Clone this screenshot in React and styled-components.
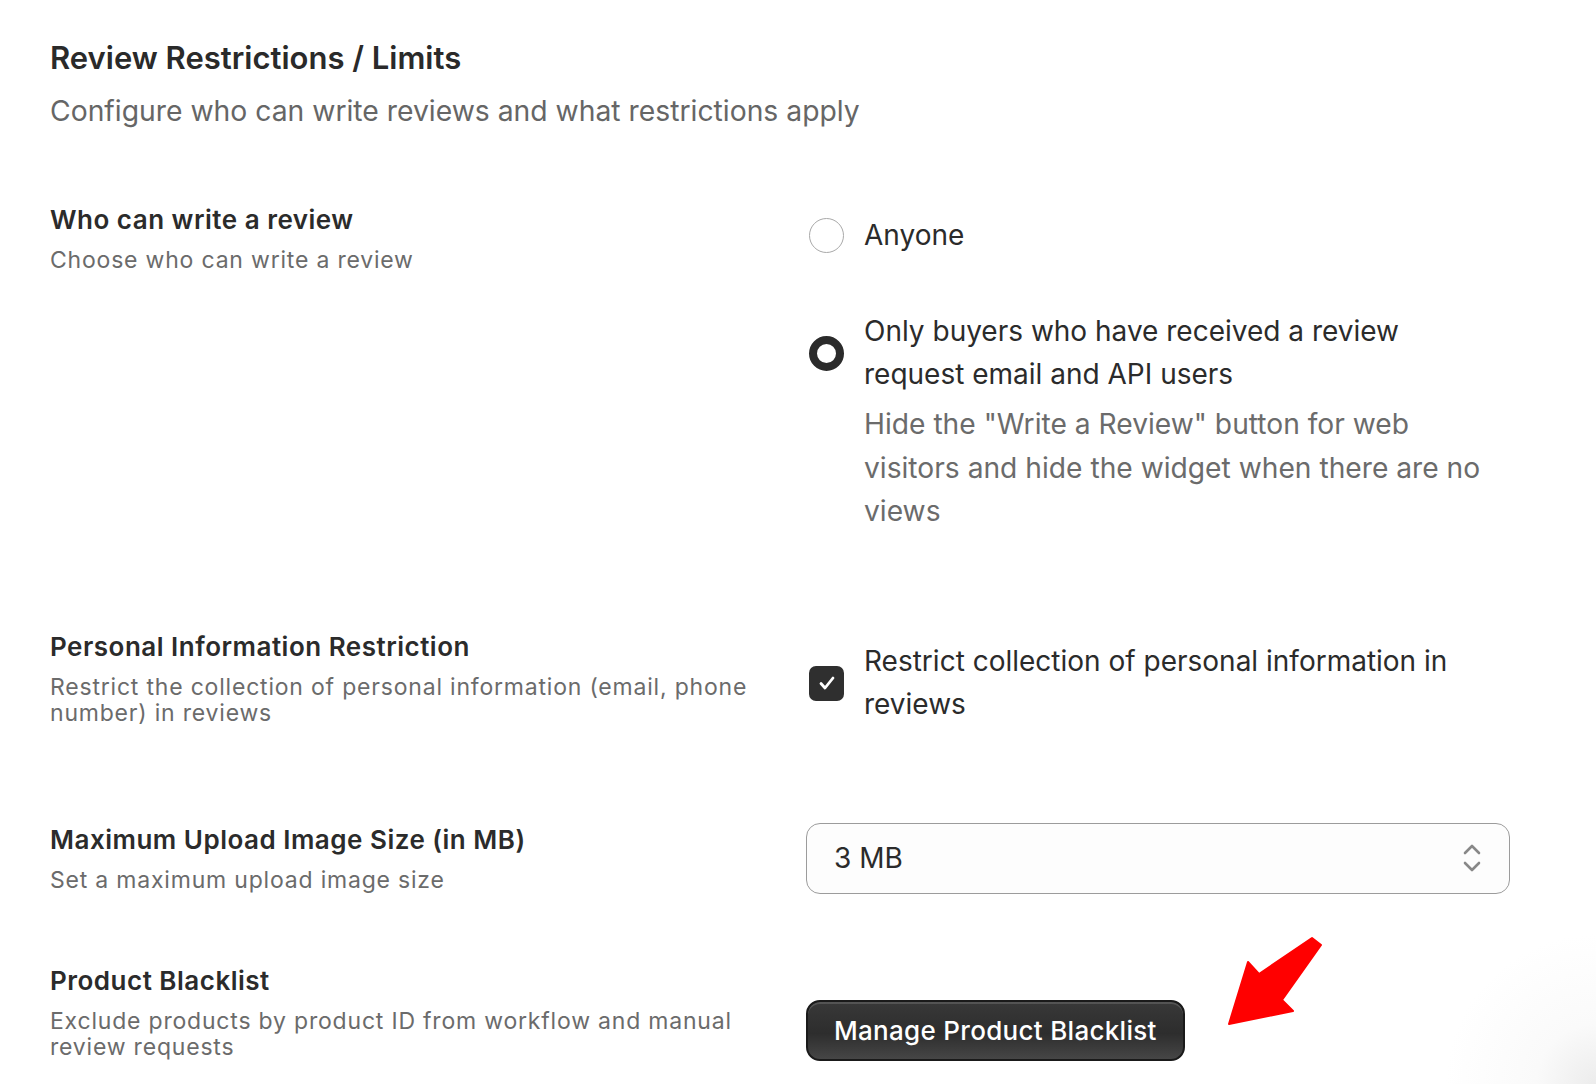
import React from 'react'
import styled, { createGlobalStyle } from 'styled-components'

const GlobalStyle = createGlobalStyle`
  html, body {
    margin: 0;
    padding: 0;
    background: #ffffff;
  }
  body {
    font-family: Inter, 'Noto Sans', 'Liberation Sans', sans-serif;
    color: #2b2b2b;
    -webkit-font-smoothing: antialiased;
  }
`

const Page = styled.div`
  width: 1596px;
  height: 1084px;
  box-sizing: border-box;
  padding: 40px 0 0 50px;
  overflow: hidden;
  background: radial-gradient(circle at 1596px 1084px, #ececec 0, #fafafa 60px, #ffffff 150px);
`

const Title = styled.h1`
  margin: 0;
  font-size: 31px;
  line-height: 36px;
  font-weight: 600;
  color: #2a2a2a;
`

const Subtitle = styled.p`
  margin: 17px 0 0;
  font-size: 28.3px;
  line-height: 36px;
  font-weight: 400;
  color: #666666;
`

const Row = styled.section`
  display: grid;
  grid-template-columns: 710px 704px;
  column-gap: 46px;
  align-items: ${p => p.$align || 'end'};
  margin-top: ${p => p.$mt}px;
`

const Info = styled.div`
  display: flex;
  flex-direction: column;
  gap: 12px;
`

const Heading = styled.h2`
  margin: 0;
  font-size: 26px;
  line-height: 30px;
  font-weight: 600;
  letter-spacing: 0.5px;
  color: #2b2b2b;
`

const Description = styled.p`
  margin: 0;
  font-size: 23px;
  line-height: 26.5px;
  font-weight: 400;
  letter-spacing: 0.8px;
  color: #6b6b6b;
`

const Options = styled.div`
  display: flex;
  flex-direction: column;
  gap: 52px;
  padding-top: 9px;
`

const Option = styled.div`
  display: flex;
  flex-direction: column;
`

const OptionLine = styled.label`
  display: flex;
  align-items: center;
  gap: 20px;
`

const Radio = styled.span`
  flex: none;
  margin-left: 3px;
  width: 35px;
  height: 35px;
  box-sizing: border-box;
  border-radius: 50%;
  background: #ffffff;
  border: ${p => (p.$checked ? '8.5px solid #2b2b2b' : '1px solid #a9a9a9')};
`

const Checkbox = styled.span`
  flex: none;
  margin-left: 3px;
  width: 35px;
  height: 35px;
  box-sizing: border-box;
  border-radius: 7px;
  background: #2f2f2f;
  display: flex;
  align-items: center;
  justify-content: center;
`

const Label = styled.span`
  max-width: 625px;
  font-size: 28px;
  line-height: 43.5px;
  color: #2b2b2b;
`

const Help = styled.p`
  margin: 6.5px 0 0 58px;
  max-width: 630px;
  font-size: 28.2px;
  line-height: 43.5px;
  color: #6b6b6b;
`

const SelectBox = styled.div`
  height: 71px;
  box-sizing: border-box;
  border: 1px solid #9c9c9c;
  border-radius: 14px;
  background: #fdfdfd;
  display: flex;
  align-items: center;
  justify-content: space-between;
  padding: 0 28px 0 27px;
  font-size: 28px;
  color: #2b2b2b;
`

const ButtonCell = styled.div`
  position: relative;
  display: flex;
  align-items: center;
`

const DarkButton = styled.button`
  height: 61px;
  padding: 0 26px;
  border-radius: 14px;
  border: 2px solid #1a1a1a;
  background: linear-gradient(#383838, #2d2d2d 55%, #464646);
  box-shadow: inset 0 2px 0 rgba(255, 255, 255, 0.14);
  color: #ffffff;
  font-family: Inter, 'Noto Sans', sans-serif;
  font-size: 26px;
  font-weight: 500;
  letter-spacing: 0.3px;
  cursor: pointer;
`

const Pointer = styled.svg`
  position: absolute;
  left: 419px;
  top: -65px;
`

const App = () => {
  return (
    <Page>
      <GlobalStyle />
      <Title>Review Restrictions / Limits</Title>
      <Subtitle>Configure who can write reviews and what restrictions apply</Subtitle>

      <Row $mt={76} $align='start'>
        <Info>
          <Heading>Who can write a review</Heading>
          <Description>Choose who can write a review</Description>
        </Info>
        <Options>
          <Option>
            <OptionLine>
              <Radio />
              <Label>Anyone</Label>
            </OptionLine>
          </Option>
          <Option>
            <OptionLine>
              <Radio $checked />
              <Label>Only buyers who have received a review request email and API users</Label>
            </OptionLine>
            <Help>
              Hide the "Write a Review" button for web visitors and hide the widget when there are no views
            </Help>
          </Option>
        </Options>
      </Row>

      <Row $mt={98}>
        <Info>
          <Heading>Personal Information Restriction</Heading>
          <Description>Restrict the collection of personal information (email, phone number) in reviews</Description>
        </Info>
        <OptionLine>
          <Checkbox>
            <svg width='22' height='22' viewBox='0 0 22 22'>
              <path d='M5 11.5l4 4.5L17 6' fill='none' stroke='#fff' strokeWidth='2.8' strokeLinecap='round' strokeLinejoin='round' />
            </svg>
          </Checkbox>
          <Label>Restrict collection of personal information in reviews</Label>
        </OptionLine>
      </Row>

      <Row $mt={96}>
        <Info>
          <Heading>Maximum Upload Image Size (in MB)</Heading>
          <Description>Set a maximum upload image size</Description>
        </Info>
        <SelectBox>
          <span>3 MB</span>
          <svg width='18' height='30' viewBox='0 0 18 30'>
            <path d='M2 10l7-7 7 7M2 20l7 7 7-7' fill='none' stroke='#888' strokeWidth='2.6' strokeLinecap='round' strokeLinejoin='round' />
          </svg>
        </SelectBox>
      </Row>

      <Row $mt={72}>
        <Info>
          <Heading>Product Blacklist</Heading>
          <Description>Exclude products by product ID from workflow and manual review requests</Description>
        </Info>
        <ButtonCell>
          <DarkButton>Manage Product Blacklist</DarkButton>
          <Pointer width='100' height='95' viewBox='0 0 100 95'>
            <path
              d='M87 3 L96 10 L57 65 L68 76 L4 89 L23 27 L34 39 Z'
              fill='#ff0000'
              stroke='#ff0000'
              strokeWidth='2'
              strokeLinejoin='round'
            />
          </Pointer>
        </ButtonCell>
      </Row>
    </Page>
  )
}

export default App
